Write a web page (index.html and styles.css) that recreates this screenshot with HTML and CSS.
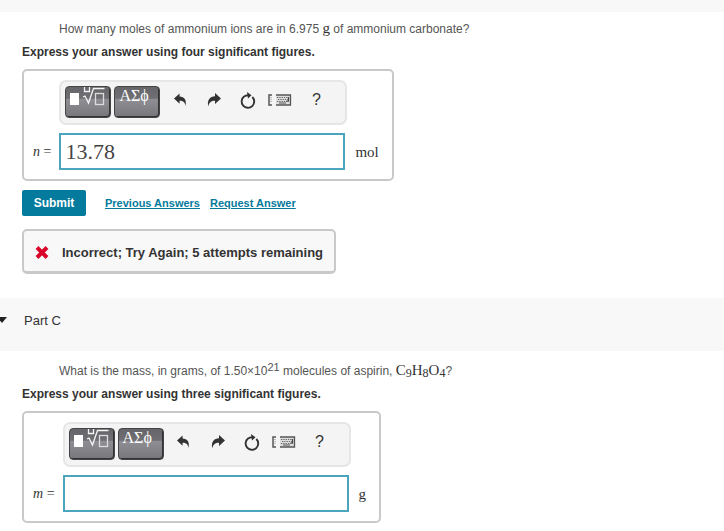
FILE: index.html
```html
<!DOCTYPE html>
<html lang="en">
<head>
  <meta charset="UTF-8" />
  <meta name="viewport" content="width=device-width, initial-scale=1" />
  <title>Molar Mass Problem</title>
  <link rel="stylesheet" href="styles.css">
</head>
<body>
  <!-- Shared toolbar icons -->
  <svg class="icon-defs" aria-hidden="true">
    <symbol id="icon-template" viewBox="0 0 44 29">
      <rect x="4" y="6" width="9" height="12" fill="#fff"/>
      <path d="M18.500 0v4.500h5V0M17 10l2-1 3.500 7 5-14.500h11" fill="none" stroke="#f4f4f4" stroke-width="1.300"/>
      <rect x="29.500" y="6.500" width="8" height="11" fill="none" stroke="#ddd" stroke-width="1.300"/>
    </symbol>
    <symbol id="icon-undo" viewBox="0 0 14 14">
      <path d="M0 5.500L6 0v3.300c5 .2 8 3.500 6.300 10.200C12 9.500 10 7.700 6 7.700V11z" fill="#333"/>
    </symbol>
    <symbol id="icon-redo" viewBox="0 0 14 14">
      <path d="M14 5.500L8 0v3.300C3 3.500 0 6.800 1.200 13.500 2 9.500 4 7.700 8 7.700V11z" fill="#333"/>
    </symbol>
    <symbol id="icon-reset" viewBox="0 0 16 17">
      <path d="M12.300 5A6.300 6.300 0 1 1 4 4.600Q5.500 3.300 8.500 3.200" fill="none" stroke="#333" stroke-width="1.900"/>
      <path d="M7 0l4.500 3.200L8 6.500z" fill="#333"/>
    </symbol>
    <symbol id="icon-keyboard" viewBox="0 0 24 12">
      <path d="M4 1H1v10h3" fill="none" stroke="#555" stroke-width="1.500"/>
      <path d="M3 3v6" stroke="#888" stroke-width="1" stroke-dasharray="1 1"/>
      <path d="M8 1h15v10H8z" fill="#ddd"/>
      <path d="M8 1h14.500v10H8" fill="none" stroke="#555" stroke-width="1.300"/>
      <path d="M9 3.500h12M10 5.500h11M9 7.500h12" stroke="#666" stroke-width="1.200" stroke-dasharray="1.300 1"/>
      <path d="M11 9h7" stroke="#555" stroke-width="1"/>
      <path d="M20.500 3v4h-2" fill="none" stroke="#444" stroke-width="1.200"/>
    </symbol>
  </svg>

  <div class="part-divider"></div>

  <section class="part">
    <p class="question">How many moles of ammonium ions are in 6.975 <span class="math">g</span> of ammonium carbonate?</p>
    <p class="instruction">Express your answer using four significant figures.</p>

    <div class="answer-box">
      <div class="toolbar">
        <button type="button" class="tool-dark" aria-label="Templates"><svg width="44" height="29"><use href="#icon-template"/></svg></button>
        <button type="button" class="tool-dark" aria-label="Symbols">ΑΣϕ</button>
        <button type="button" class="tool" aria-label="Undo"><svg width="13" height="14"><use href="#icon-undo"/></svg></button>
        <button type="button" class="tool" aria-label="Redo"><svg width="14" height="14"><use href="#icon-redo"/></svg></button>
        <button type="button" class="tool" aria-label="Reset"><svg width="16" height="17"><use href="#icon-reset"/></svg></button>
        <button type="button" class="tool tool-keyboard" aria-label="Keyboard shortcuts"><svg width="24" height="12"><use href="#icon-keyboard"/></svg></button>
        <button type="button" class="tool tool-help" aria-label="Help">?</button>
      </div>
      <label class="variable" for="answerB"><i>n</i> =</label>
      <input class="answer-input" id="answerB" type="text" value="13.78" />
      <span class="unit">mol</span>
    </div>

    <div class="actions">
      <button type="button" class="submit-btn">Submit</button>
      <a href="#">Previous Answers</a>
      <a href="#">Request Answer</a>
    </div>

    <div class="feedback">
      <svg width="14" height="13" viewBox="0 0 14 13" aria-hidden="true">
        <path d="M2 1.500l10 10M12 1.500l-10 10" stroke="#d9062a" stroke-width="4"/>
      </svg>
      <span>Incorrect; Try Again; 5 attempts remaining</span>
    </div>
  </section>

  <h2 class="part-header"><span class="arrow"></span>Part C</h2>

  <section class="part">
    <p class="question">What is the mass, in grams, of 1.50×10<sup>21</sup> molecules of aspirin, <span class="math">C<sub>9</sub>H<sub>8</sub>O<sub>4</sub></span>?</p>
    <p class="instruction">Express your answer using three significant figures.</p>

    <div class="answer-box">
      <div class="toolbar">
        <button type="button" class="tool-dark" aria-label="Templates"><svg width="44" height="29"><use href="#icon-template"/></svg></button>
        <button type="button" class="tool-dark" aria-label="Symbols">ΑΣϕ</button>
        <button type="button" class="tool" aria-label="Undo"><svg width="13" height="14"><use href="#icon-undo"/></svg></button>
        <button type="button" class="tool" aria-label="Redo"><svg width="14" height="14"><use href="#icon-redo"/></svg></button>
        <button type="button" class="tool" aria-label="Reset"><svg width="16" height="17"><use href="#icon-reset"/></svg></button>
        <button type="button" class="tool tool-keyboard" aria-label="Keyboard shortcuts"><svg width="24" height="12"><use href="#icon-keyboard"/></svg></button>
        <button type="button" class="tool tool-help" aria-label="Help">?</button>
      </div>
      <label class="variable" for="answerC"><i>m</i> =</label>
      <input class="answer-input" id="answerC" type="text" />
      <span class="unit">g</span>
    </div>
  </section>
</body>
</html>
```
FILE: styles.css
```css
* {
  box-sizing: border-box;
  margin: 0;
  padding: 0;
}
body {
  background: #fff;
  color: #333;
  font-family: "Liberation Sans", Arial, sans-serif;
  font-size: 12px;
}
.icon-defs {
  display: none;
}
.part-divider {
  height: 12px;
  background: #f8f8f8;
}
.part {
  padding: 8px 22px;
}
.question {
  padding-left: 37px;
  line-height: 18px;
  color: #555;
}
.question sup {
  font-size: 11px;
  line-height: 0;
  vertical-align: 4px;
}
.math {
  font-family: "Liberation Serif", serif;
  font-size: 15px;
  line-height: 1;
  color: #333;
}
.math sub {
  font-size: 12px;
  line-height: 0;
  vertical-align: -2px;
}
.instruction {
  margin-top: 5px;
  line-height: 18px;
  font-weight: 700;
}
.answer-box {
  display: inline-grid;
  grid-template-columns: auto 288px auto;
  column-gap: 8px;
  row-gap: 8px;
  align-items: center;
  margin-top: 8px;
  padding: 9px 13px 9px 9px;
  border: 2px solid #c9c9c9;
  border-radius: 5px;
  vertical-align: top;
}
.toolbar {
  grid-column: 2;
  display: flex;
  height: 45px;
  padding: 4px;
  border: 2px solid #e6e6e6;
  border-radius: 7px;
  background: #f4f4f4;
}
.tool-dark {
  flex: none;
  width: 46px;
  height: 32px;
  margin-right: 3px;
  border: 1px solid #444;
  border-radius: 4px;
  background: linear-gradient(#66666a 0%, #707074 38%, #8e8e94 40%, #77777b 100%);
  box-shadow: inset -1px -1px 0 #333;
  color: #fff;
  font-family: "Liberation Serif", serif;
  font-size: 16px;
  line-height: 18px;
  display: flex;
  align-items: flex-start;
  padding-left: 4px;
}
.tool-dark svg {
  flex: none;
  margin-left: -4px;
}
.tool {
  width: 34px;
  height: 28px;
  border: none;
  background: none;
  color: #333;
  display: flex;
  align-items: center;
  justify-content: center;
}
.tool-keyboard {
  width: 30px;
}
.tool-help {
  width: 42px;
  font-family: "Liberation Sans", Arial, sans-serif;
  font-size: 16px;
}
.variable,
.unit {
  font-family: "Liberation Serif", serif;
  font-size: 15px;
  line-height: 18px;
}
.variable {
  grid-column: 1;
  font-size: 14px;
}
.answer-input {
  width: 286px;
  height: 37px;
  padding: 0 4px;
  border: 2px solid #4ba6bd;
  background: #fff;
  color: #444;
  font-family: "Liberation Serif", serif;
  font-size: 22px;
}
.actions {
  display: flex;
  align-items: center;
  gap: 10px;
  margin-top: 9px;
}
.submit-btn {
  margin-right: 9px;
  width: 64px;
  height: 26px;
  border: none;
  border-radius: 2px;
  background: #047a9c;
  color: #fff;
  font-family: "Liberation Sans", Arial, sans-serif;
  font-size: 12px;
  font-weight: 700;
}
.actions a {
  color: #047a9c;
  font-size: 11px;
  font-weight: 700;
}
.feedback {
  display: inline-flex;
  align-items: center;
  gap: 13px;
  margin-top: 13px;
  height: 45px;
  padding: 3px 11px 0;
  border: 2px solid #c9c9c9;
  border-bottom-width: 3px;
  border-radius: 5px;
  background: #f8f8f8;
  font-size: 13px;
  font-weight: 700;
  vertical-align: top;
}
.part-header {
  display: flex;
  align-items: center;
  height: 53px;
  margin-top: 16px;
  margin-bottom: 3px;
  padding-bottom: 9px;
  background: #f8f8f8;
  font-size: 13px;
  font-weight: 400;
}
.arrow {
  margin-left: -3px;
  margin-right: 17px;
  border: 5px solid transparent;
  border-top: 6px solid #222;
  border-bottom: none;
}
```
